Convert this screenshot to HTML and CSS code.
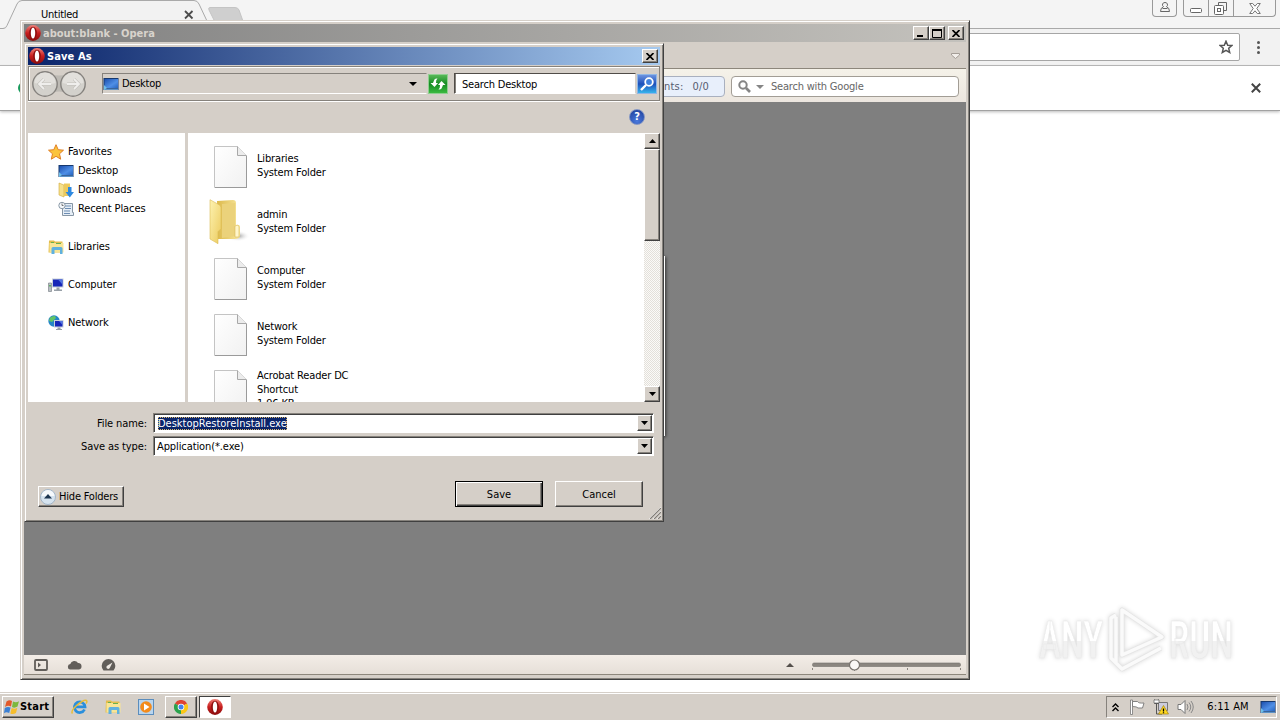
FILE: index.html
```
<!DOCTYPE html>
<html lang="en">
<head>
    <meta charset="UTF-8">
    <meta name="viewport" content="width=device-width, initial-scale=1.0">
    <title>Save As</title>
    <link rel="stylesheet" href="styles.css">
</head>
<body>
    <!-- shared icons -->
    <svg class="defs" width="0" height="0">
        <defs>
            <linearGradient id="gRed" x1="0" y1="0" x2="0" y2="1"><stop offset="0" stop-color="#f08078"/><stop offset=".5" stop-color="#c81e1e"/><stop offset="1" stop-color="#8a0c0c"/></linearGradient>
            <linearGradient id="gBlue" x1="0" y1="0" x2="1" y2="1"><stop offset="0" stop-color="#1c4fae"/><stop offset=".6" stop-color="#4f8fe6"/><stop offset="1" stop-color="#2765c0"/></linearGradient>
            <linearGradient id="gFold" x1="0" y1="0" x2="1" y2="0"><stop offset="0" stop-color="#dcb94c"/><stop offset="1" stop-color="#f8e79c"/></linearGradient>
            <linearGradient id="gFlap" x1="0" y1="0" x2="1" y2="1"><stop offset="0" stop-color="#fdf2b0"/><stop offset="1" stop-color="#eccb5f"/></linearGradient>
            <radialGradient id="gShade"><stop offset="0" stop-color="#9a9a9a"/><stop offset="1" stop-color="#fff" stop-opacity="0"/></radialGradient>
            <linearGradient id="gPage" x1="0" y1="0" x2="1" y2="1"><stop offset="0" stop-color="#ffffff"/><stop offset="1" stop-color="#f1f1f1"/></linearGradient>
            <linearGradient id="gMark" x1="0" y1="0" x2="0" y2="1"><stop offset="0.5" stop-color="#ffffff"/><stop offset=".51" stop-color="#f1f1f1"/></linearGradient>
        </defs>
        <symbol id="opera" viewBox="0 0 16 16">
            <ellipse cx="8" cy="8" rx="7.8" ry="7.900" fill="url(#gRed)"/>
            <ellipse cx="8" cy="8" rx="3.800" ry="6.300" fill="#8d0f0f"/>
            <ellipse cx="8" cy="8" rx="2.200" ry="5.600" class="opera-hole"/>
        </symbol>
        <symbol id="desktop" viewBox="0 0 16 16">
            <rect x=".5" y="2" width="15" height="12" fill="#16386e"/>
            <rect x="1.5" y="3" width="13.500" height="9" fill="url(#gBlue)"/>
            <path d="M1 12.500h14v1.500H1z" fill="#5d93c8"/>
            <path d="M1 9l3 3-3 2z" fill="#6fc0e8"/>
        </symbol>
        <symbol id="libs" viewBox="0 0 16 16">
            <path d="M1 1.500h5l1 1h7.500V13.500H.5z" fill="#e3bd4c"/>
            <path d="M1.500 4h14v9.500H1.500z" fill="#f8e596"/>
            <path d="M3 3h3v1H3zM8 4h5v1H8z" fill="#69b04e"/>
            <path d="M3.500 15V9.500q0-1.500 1.500-1.500h8q1.500 0 1.500 1.500V15H12v-4H6.500v4z" fill="#5fb1df"/>
        </symbol>
        <symbol id="page" viewBox="0 0 34 42">
            <path d="M.5.5h23l9 9v32H.5z" fill="url(#gPage)" stroke="#c4c4c4"/>
            <path d="M1 41.500h32M32.500 10v31" stroke="#9a9a9a" fill="none"/>
            <path d="M23.500.5v9h9" fill="#ececec" stroke="#a8a8a8"/>
        </symbol>
        <symbol id="down" viewBox="0 0 7 4"><path d="M0 0h7L3.500 4z"/></symbol>
        <symbol id="up" viewBox="0 0 7 4"><path d="M0 4h7L3.500 0z"/></symbol>
        <symbol id="cross" viewBox="0 0 8 7"><path d="M.5 0l7 7M7.500 0l-7 7" stroke="#000" stroke-width="1.700" fill="none"/></symbol>
    </svg>

    <main class="desktop">
        <!-- Chrome -->
        <section class="chrome">
            <header class="chrome-tabs">
                <svg class="tab-shape" width="250" height="29">
                    <path d="M0 28.500h3q3 0 4-3L17 4q1.500-3.500 5-3.500h172q3.500 0 5 3.500l8 17v8H0z" fill="#f2f2f2"/>
                    <path d="M0 28.500h3q3 0 4-3L17 4q1.500-3.500 5-3.500h172q3.500 0 5 3.500l8 17" fill="none" stroke="#a9a9a9"/>
                    <path d="M210 7.500h25q3 0 4 2.500l5 14h-28l-7-14q-1-2.500 1-2.500z" fill="#cfcfcf" stroke="#c4c4c4"/>
                    <path d="M185 11l7.500 7.500M192.500 11L185 18.500" stroke="#4c4c4c" stroke-width="1.800"/>
                </svg>
                <span class="tab-title">Untitled</span>
                <div class="chrome-user"><svg width="12" height="12"><path d="M6 1.500a2.300 2.300 0 0 1 1.500 4.200q3 1 3 4.800h-9q0-3.800 3-4.800A2.300 2.300 0 0 1 6 1.500zM3.500 7.500h5" fill="none" stroke="#666"/></svg></div>
                <div class="chrome-controls">
                    <span class="min"><svg width="12" height="5"><rect x=".5" y=".5" width="11" height="4" rx="1" fill="#fff" stroke="#666"/></svg></span>
                    <span class="max"><svg width="13" height="13"><path d="M4.500 3V.5h8v8H10" fill="none" stroke="#666"/><rect x=".5" y="3.500" width="9" height="9" rx="1" fill="#fff" stroke="#666"/><rect x="3.500" y="6.500" width="3" height="3" fill="none" stroke="#666"/></svg></span>
                    <span class="cls"><svg width="12" height="11"><path d="M.7.5h3L6 3.200 8.300.5h3L7.800 5.500l3.500 5h-3L6 7.800 3.700 10.500h-3l3.500-5z" fill="#fff" stroke="#777"/></svg></span>
                </div>
            </header>
            <div class="chrome-toolbar">
                <div class="omnibox"><svg width="14" height="14" viewBox="0 0 14 14"><path d="M7 1.200l1.700 4 4.200.3-3.200 2.800 1 4.200L7 10.300l-3.700 2.200 1-4.200L1.100 5.500l4.200-.3z" fill="none" stroke="#555" stroke-width="1.500"/></svg></div>
                <div class="dots"><i></i><i></i><i></i></div>
            </div>
            <div class="infobar">
                <i class="green-dot"></i>
                <svg width="10" height="10"><path d="M.8.8l8.400 8.400M9.200.8L.8 9.200" stroke="#444" stroke-width="2"/></svg>
            </div>
        </section>

        <!-- Anyrun watermark -->
        <svg class="watermark" width="240" height="80" viewBox="0 0 240 80">
            <g fill="url(#gMark)" stroke="#e9e9e9" stroke-width=".5">
                <text x="10" y="55" textLength="64" lengthAdjust="spacingAndGlyphs">ANY</text>
                <text x="140" y="55" textLength="64" lengthAdjust="spacingAndGlyphs">RUN</text>
            </g>
            <g fill="none" stroke-linejoin="round">
                <path d="M87 12l-5 3v40l11 11 39-21M93 7v45l40-18zM87 14v46" stroke="#e6e6e6" stroke-width="5"/>
                <path d="M87 12l-5 3v40l11 11 39-21M93 7v45l40-18zM87 14v46" stroke="#fafafa" stroke-width="3.400"/>
            </g>
        </svg>

        <!-- Opera -->
        <section class="window opera-win">
            <header class="titlebar inactive">
                <svg class="app-icon gray-hole" width="16" height="16"><use href="#opera"/></svg>
                <span class="caption">about:blank - Opera</span>
                <span class="tb-btn"><svg width="8" height="7"><path d="M0 5h6v2H0z"/></svg></span>
                <span class="tb-btn"><svg width="10" height="9"><path d="M.5 1h9v7.500h-9z" fill="none" stroke="#000"/><path d="M0 0h10v2H0z"/></svg></span>
                <span class="tb-btn last"><svg width="8" height="7"><use href="#cross"/></svg></span>
            </header>
            <div class="opera-tabs"><svg width="9" height="6"><path d="M.5.5h8v1.500l-4 3.500-4-3.500z" fill="#f2eeea" stroke="#a49d96"/></svg></div>
            <div class="opera-toolbar">
                <div class="elements"><span>Elements:</span><span>0/0</span></div>
                <div class="google">
                    <svg width="13" height="13"><circle cx="5" cy="5" r="3.700" fill="none" stroke="#858585" stroke-width="2"/><path d="M8 8l4 4" stroke="#858585" stroke-width="2.600"/></svg>
                    <svg class="drop" width="8" height="4"><path d="M0 0h8L4 4z" fill="#858585"/></svg>
                    <span>Search with Google</span>
                </div>
            </div>
            <div class="opera-page"></div>
            <footer class="opera-status">
                <svg width="14" height="12"><rect x="1" y="1" width="12" height="10" rx="1" fill="none" stroke="#625e5a" stroke-width="1.800"/><path d="M4 3.500L7 6 4 8.500z" fill="#625e5a"/></svg>
                <svg width="15" height="11"><path d="M3 10.500a2.800 2.800 0 0 1 .3-5.500A4.200 4.200 0 0 1 11 4a3.300 3.300 0 0 1 1 6.500z" fill="#625e5a"/></svg>
                <svg width="15" height="12"><path d="M2.500 11.500A6.800 6.800 0 1 1 12.500 11.500z" fill="#625e5a"/><path d="M11.500 3.500L9 8.500a1.800 1.800 0 1 1-2.500-2z" fill="#eee9e3"/></svg>
                <svg class="status-up" width="8" height="4"><path d="M0 4h8L4 0z" fill="#55504c"/></svg>
                <svg width="150" height="16">
                    <rect x=".5" y="6" width="148" height="3.500" rx="1.500" fill="#8b8680" stroke="#74706b" stroke-width=".6"/>
                    <path d="M.5 11v2M42.500 12v2M95.500 11v2M148.500 11v2" stroke="#8b8680"/>
                    <circle cx="42.500" cy="8" r="5" fill="#faf8f6" stroke="#77726d" stroke-width="1.200"/>
                </svg>
            </footer>
        </section>

        <div class="behind"></div>

        <!-- Save As dialog -->
        <section class="window dialog">
            <header class="titlebar active">
                <svg class="app-icon" width="16" height="16"><use href="#opera"/></svg>
                <span class="caption">Save As</span>
                <span class="tb-btn"><svg width="8" height="7"><use href="#cross"/></svg></span>
            </header>
            <div class="addressbar">
                <svg class="nav-btns" width="56" height="28">
                    <path d="M14 3q14 5 28 0v21q-14-5-28 0z" fill="#bdbab4"/>
                    <g fill="#d3d1cc" stroke="#85827e" stroke-width="1.400"><circle cx="14" cy="14" r="12.200"/><circle cx="42" cy="14" r="12.200"/></g>
                    <path d="M3.500 13a10.500 10.500 0 0 1 21 0q-10 3-21 0zM31.500 13a10.500 10.500 0 0 1 21 0q-10 3-21 0z" fill="#e2e0dc"/>
                    <path d="M20 14H8.500M13 9l-5 5 5 5M36 14h11.500M43 9l5 5-5 5" fill="none" stroke="#c2bfba" stroke-width="3"/>
                    <path d="M20 14H8.500M13 9l-5 5 5 5M36 14h11.500M43 9l5 5-5 5" fill="none" stroke="#efeeec" stroke-width="1.800"/>
                </svg>
                <div class="address">
                    <svg width="16" height="16"><use href="#desktop"/></svg>
                    <span>Desktop</span>
                    <svg class="arrow" width="8" height="4"><path d="M0 0h8L4 4z"/></svg>
                </div>
                <div class="refresh"><svg width="18" height="18"><path d="M5 5.500Q5.500 3 8.500 3.500 6.800 4.500 7 8h2L5.500 12 1.500 8H4zM13 12.500q-.5 2.500-3.500 2Q11.200 13.500 11 10H9l3.500-4 4 4H14z" fill="#fff"/></svg></div>
                <div class="search">Search Desktop</div>
                <div class="search-btn"><svg width="18" height="18"><circle cx="11" cy="7" r="3.800" fill="#3f80dc" stroke="#fff" stroke-width="1.800"/><path d="M8 10l-5 5" stroke="#fff" stroke-width="2.400"/></svg></div>
            </div>
            <div class="helpbar">
                <div class="help">?</div>
            </div>
            <div class="panes">
                <nav class="tree">
                    <div class="node"><svg width="16" height="16"><path d="M8 .7l2.200 5 5.300.5-4 3.600 1.200 5.400L8 12.300l-4.700 2.900 1.200-5.400-4-3.600 5.300-.5z" fill="#fbc43c" stroke="#e07f26"/></svg>Favorites</div>
                    <div class="node sub"><svg width="16" height="16"><use href="#desktop"/></svg>Desktop</div>
                    <div class="node sub"><svg width="16" height="16"><path d="M1 1l5 2v12l-5-2z" fill="#f6e08a" stroke="#d2a93a" stroke-width=".6"/><path d="M6 1.500h6V14H6z" fill="#edca5c"/><path d="M10 5h3.500v5H16l-4.200 5.500L7.500 10H10z" fill="#2f8ae0"/></svg>Downloads</div>
                    <div class="node sub"><svg width="16" height="16"><path d="M4.500 2.500h10v9h1v3h-11z" fill="#e6eef6" stroke="#8796a5"/><path d="M7 5h6M7 7.500h6M6 10h6M6 12.500h6" stroke="#6d8db3"/><circle cx="4" cy="4.500" r="3.200" fill="#f4f7fa" stroke="#8998a6"/><path d="M4 2.500v2h1.500" fill="none" stroke="#555" stroke-width=".8"/></svg>Recent Places</div>
                    <div class="node top"><svg width="16" height="16"><use href="#libs"/></svg>Libraries</div>
                    <div class="node top"><svg width="16" height="16"><path d="M.5 6h3v8.500h-3z" fill="#b9bfc4" stroke="#7f868c" stroke-width=".7"/><path d="M4 1.500h11.500v9H4z" fill="#c6cfda"/><path d="M5 2.500h9.500V9.500H5z" fill="#1726b8"/><path d="M10 2.500h4.500v5z" fill="#5477e2"/><path d="M8.500 10.500h3v2h2.500v1.500H6v-1.500h2.500z" fill="#98a0a8"/><path d="M1.300 8h1.400v1.500H1.300z" fill="#3ea845"/></svg>Computer</div>
                    <div class="node top"><svg width="16" height="16"><circle cx="6" cy="6" r="5.700" fill="#2486c8"/><path d="M2 2.500q3-2 5-1.500l1 2-4 4-3-1zM6 7l3 2-2 2.700z" fill="#62c465"/><path d="M6 5h9.500v7.500H6z" fill="#c6cfda"/><path d="M7 6h7.500v5.500H7z" fill="#1726b8"/><path d="M11 6h3.500v4z" fill="#5477e2"/><path d="M9.500 12.500h3v1.500H14v1H8v-1h1.500z" fill="#98a0a8"/></svg>Network</div>
                </nav>
                <div class="files">
                    <div class="file"><div class="thumb"><svg width="34" height="42"><use href="#page"/></svg></div><div>Libraries<br>System Folder</div></div>
                    <div class="file"><div class="thumb folder"><svg width="42" height="46"><ellipse cx="29" cy="37" rx="12" ry="5.500" fill="url(#gShade)"/><path d="M8 2l16-1q3 0 3 3v22q4-1 4 2v9q-1 3-5 3H9z" fill="url(#gFold)"/><path d="M13 5l13-1v33l-13 2z" fill="#ebd27b"/><path d="M26 27q4-2 4 1v10h-4z" fill="#fff6ca" stroke="#d9bb5c" stroke-width=".6"/><path d="M1 .7l9 5q2 1 2 3v21l-3 3v12L1 40z" fill="url(#gFlap)" stroke="#dcbc56" stroke-width=".6"/></svg></div><div>admin<br>System Folder</div></div>
                    <div class="file"><div class="thumb"><svg width="34" height="42"><use href="#page"/></svg></div><div>Computer<br>System Folder</div></div>
                    <div class="file"><div class="thumb"><svg width="34" height="42"><use href="#page"/></svg></div><div>Network<br>System Folder</div></div>
                    <div class="file"><div class="thumb"><svg width="34" height="42"><use href="#page"/></svg></div><div>Acrobat Reader DC<br>Shortcut<br>1.96 KB</div></div>
                </div>
                <div class="scrollbar">
                    <span class="sb-btn"><svg width="7" height="4"><use href="#up"/></svg></span>
                    <span class="sb-thumb"></span>
                    <span class="sb-btn end"><svg width="7" height="4"><use href="#down"/></svg></span>
                </div>
            </div>
            <div class="fields">
                <span class="label">File name:</span>
                <div class="combo"><span class="selected">DesktopRestoreInstall.exe</span><span class="sb-btn"><svg width="7" height="4"><use href="#down"/></svg></span></div>
                <span class="label">Save as type:</span>
                <div class="combo"><span class="type">Application(*.exe)</span><span class="sb-btn"><svg width="7" height="4"><use href="#down"/></svg></span></div>
            </div>
            <div class="actions">
                <div class="button hide"><svg width="16" height="16"><circle cx="8" cy="8" r="7.500" fill="#d5e3ef" stroke="#a3b6c8"/><path d="M1.500 7a6.500 6 0 0 1 13 0z" fill="#f5f9fc"/><path d="M4 9.500h8L8 5z" fill="#1c3550"/></svg><span>Hide Folders</span></div>
                <div class="button default"><span>Save</span></div>
                <div class="button cancel"><span>Cancel</span></div>
            </div>
            <svg class="grip" width="12" height="12"><path d="M0 12L12 0M4 12l8-8M8 12l4-4" stroke="#fff"/><path d="M1 12L12 1M5 12l7-7M9 12l3-3" stroke="#807c76" stroke-width="1.200"/></svg>
        </section>
    </main>

    <footer class="taskbar">
        <div class="start">
            <svg width="16" height="16"><path d="M2.500 2.500q3-2 5.500-.5L7 7.500Q4 6 1 8z" fill="#e2592a"/><path d="M9 2.500q3 1.500 6-.3L13.500 7.500q-3 2-5.500.5z" fill="#7cb83c"/><path d="M.8 9q3-1.800 5.800-.4L5.200 14q-3-1.500-5.200.2z" fill="#3b80d4"/><path d="M7.700 9q3 1.500 5.600-.2L12 14q-3 2-5.700.4z" fill="#f6bd2b"/></svg>
            <span>Start</span>
        </div>
        <div class="quick">
            <svg width="17" height="16"><path d="M13.500 10.500A5.300 5.300 0 1 1 14 7.800H5" fill="none" stroke="#2a8fdc" stroke-width="2.800"/><path d="M1.500 14.500q-2-2 3.500-7.500 8-7 10.500-5.500 1 1-.5 3" fill="none" stroke="#e8bd38" stroke-width="1.500"/></svg>
            <svg width="16" height="16"><use href="#libs"/></svg>
            <svg width="16" height="16"><rect x=".5" y=".5" width="15" height="15" fill="#b9d5ee" stroke="#5b8dbd"/><circle cx="8" cy="8" r="5.800" fill="#f38b1c"/><path d="M6 4.500L11.500 8 6 11.500z" fill="#fff"/></svg>
        </div>
        <div class="task"><svg width="14" height="14" viewBox="0 0 14 14"><path d="M7 7L.9 3.500A7 7 0 0 1 13.100 3.500z" fill="#df4334"/><path d="M7 7V14A7 7 0 0 1 .9 3.500z" fill="#2ba24c"/><path d="M7 7l6.100-3.500A7 7 0 0 1 7 14z" fill="#fbc716"/><circle cx="7" cy="7" r="3.300" fill="#fff"/><circle cx="7" cy="7" r="2.500" fill="#4482ee"/></svg></div>
        <div class="task pressed"><svg width="16" height="16"><use href="#opera"/></svg></div>
        <div class="tray">
            <svg width="7" height="9"><path d="M.5 4l3-3 3 3M.5 8l3-3 3 3" fill="none" stroke="#000" stroke-width="1.400"/></svg>
            <svg class="flag" width="16" height="16"><path d="M1.500 1v14.500h2V1z" fill="#fff" stroke="#777" stroke-width=".8"/><path d="M3.500 2.500h5q1 2 6.500 1.500l-1.500 5H9q-1-1.500-5.500-1.500z" fill="#fff" stroke="#777" stroke-width=".9"/></svg>
            <svg class="net" width="16" height="16"><path d="M5.500 3.500h9v8h-9z" fill="#ccd" stroke="#777"/><path d="M1.500.5v4h4v-4M3.500 4.500V15H9" fill="none" stroke="#555"/><path d="M1 1h5v3H1z" fill="#fff" stroke="#666" stroke-width=".7"/><path d="M10.500 6.500L15.500 15h-10z" fill="#ffd91f" stroke="#a48312" stroke-width=".7"/><path d="M10.500 9.500v3M10.500 13.200v1" stroke="#000" stroke-width="1.300"/></svg>
            <svg class="vol" width="17" height="16"><path d="M1 5.500h3l4-4v13l-4-4H1z" fill="#fff" stroke="#777"/><path d="M10 5q2 3 0 6M12 3.500q3.500 4.500 0 9M14 2q4.500 6 0 12" fill="none" stroke="#888"/></svg>
            <span class="clock">6:11 AM</span>
            <svg width="16" height="16"><use href="#desktop"/></svg>
        </div>
    </footer>
</body>
</html>
```
FILE: styles.css
```
* {
    box-sizing: border-box;
}
body {
    margin: 0;
    width: 1280px;
    height: 720px;
    overflow: hidden;
    display: flex;
    flex-direction: column;
    background: #fff;
    font-family: "DejaVu Sans Condensed", "DejaVu Sans", sans-serif;
    font-stretch: condensed;
    font-size: 11px;
    line-height: 14px;
    letter-spacing: -0.1px;
    color: #000;
    white-space: nowrap;
}
svg {
    display: block;
    flex: none;
}
.defs {
    position: absolute;
}
.desktop {
    position: relative;
    height: 692px;
}

/* Chrome */
.chrome {
    height: 692px;
    background: #fff;
}
.chrome-tabs {
    display: flex;
    height: 29px;
    background: #f4f4f4;
    border-bottom: 1px solid #a9a9a9;
}
.tab-shape {
    margin-right: -250px;
}
.tab-title {
    padding: 8px 0 0 41px;
    flex: 1;
    z-index: 1;
    letter-spacing: -0.25px;
}
.chrome-user {
    width: 25px;
    height: 17px;
    border: 1px solid #999;
    border-top: 0;
    border-radius: 0 0 4px 4px;
    padding: 1px 0 0 6px;
    margin-right: 6px;
}
.chrome-controls {
    display: flex;
    width: 93px;
    height: 17px;
    border: 1px solid #999;
    border-top: 0;
    border-radius: 0 0 4px 4px;
    margin-right: 4px;
}
.chrome-controls .min {
    width: 25px;
    padding: 8px 0 0 6px;
    border-right: 1px solid #999;
}
.chrome-controls .max {
    width: 25px;
    padding: 2px 0 0 5px;
    border-right: 1px solid #999;
}
.chrome-controls .cls {
    padding: 3px 0 0 15px;
}
.chrome-toolbar {
    display: flex;
    height: 37px;
    padding: 4px 0 0 26px;
    background: #f2f2f2;
    border-bottom: 1px solid #b4b4b4;
}
.omnibox {
    width: 1214px;
    height: 28px;
    background: #fff;
    border: 1px solid #a6a6a6;
    border-radius: 2px;
    display: flex;
    justify-content: flex-end;
    align-items: center;
    padding-right: 6px;
}
.dots {
    display: flex;
    flex-direction: column;
    gap: 2px;
    padding: 8px 0 0 17px;
}
.dots i {
    width: 3px;
    height: 3px;
    border-radius: 50%;
    background: #555;
}
.infobar {
    display: flex;
    align-items: center;
    justify-content: space-between;
    height: 45px;
    padding: 0 19px 0 18px;
    border-bottom: 1px solid #a2a2a2;
    box-shadow: 0 1px 3px #bbb;
}
.green-dot {
    width: 12px;
    height: 12px;
    border-radius: 50%;
    background: #189a5c;
}

.watermark {
    position: absolute;
    left: 1029px;
    top: 603px;
    filter: drop-shadow(0 0 2px #d8d8d8);
    font-family: "Roboto", sans-serif;
    font-size: 52px;
    font-weight: 500;
    letter-spacing: 0;
}

/* Classic windows */
.window {
    position: absolute;
    display: flex;
    flex-direction: column;
    background: #d5cfc8;
    border: 1px solid;
    border-color: #d5cfc8 #404040 #404040 #d5cfc8;
    box-shadow: inset 1px 1px #fff, inset -1px -1px #86827c;
    padding: 3px;
}
.opera-win {
    left: 20px;
    top: 20px;
    width: 950px;
    height: 660px;
}
.dialog {
    left: 24px;
    top: 43px;
    width: 640px;
    height: 479px;
}
.titlebar {
    display: flex;
    align-items: center;
    height: 18px;
    font-weight: bold;
    flex: none;
}
.inactive {
    background: linear-gradient(90deg, #808080, #c4c2bd);
    color: #d8d3cc;
    padding-right: 2px;
}
.active {
    background: linear-gradient(90deg, #0a246a, #a6caf0);
    color: #fff;
    padding-right: 2px;
}
.app-icon {
    margin: 0 2px 0 1px;
}
.opera-hole {
    fill: #fff;
}
.active .opera-hole {
    fill: #12307a;
}
.gray-hole .opera-hole {
    fill: #858585;
}
.caption {
    flex: 1;
    padding-top: 1px;
    letter-spacing: 0;
}
.active .caption {
    letter-spacing: 0.1px;
}
.tb-btn, .sb-btn {
    display: flex;
    align-items: center;
    justify-content: center;
    width: 16px;
    height: 14px;
    background: #d5cfc8;
    border: 1px solid;
    border-color: #fff #404040 #404040 #fff;
    box-shadow: inset -1px -1px #86827c;
    flex: none;
}
.tb-btn.last {
    margin-left: 3px;
}
.opera-tabs {
    display: flex;
    align-items: center;
    justify-content: flex-end;
    height: 27px;
    padding: 2px 6px 0 0;
    border-bottom: 1px solid #8d877c;
}
.opera-toolbar {
    display: flex;
    justify-content: flex-end;
    gap: 6px;
    height: 33px;
    padding: 7px 7px 0 0;
    background: linear-gradient(#f5f2e9, #ece6df);
    color: #666;
}
.elements {
    display: flex;
    justify-content: flex-end;
    gap: 9px;
    width: 400px;
    height: 21px;
    padding: 3px 15px 0 0;
    border: 1px solid #a9b0bf;
    border-radius: 4px;
    background: #e8effb;
    color: #555c70;
    letter-spacing: 0.2px;
}
.google {
    display: flex;
    align-items: center;
    width: 228px;
    height: 21px;
    padding-left: 6px;
    background: #fff;
    border: 1px solid #a29d95;
    border-radius: 4px;
    letter-spacing: -0.2px;
}
.google .drop {
    margin: 0 7px 0 5px;
}
.opera-page {
    height: 553px;
    background: #7f7f7f;
}
.opera-status {
    display: flex;
    align-items: center;
    gap: 19px;
    height: 20px;
    padding: 0 4px 0 10px;
    background: linear-gradient(#f3ede7, #e6dfd8);
    border-bottom: 1px solid #8d877c;
}
.status-up {
    margin-left: auto;
}
.opera-status .status-up + svg {
    margin-left: -1px;
}
.behind {
    position: absolute;
    left: 600px;
    top: 256px;
    width: 65px;
    height: 180px;
    background: #fff;
    box-shadow: 1px 1px 3px #333;
}

/* Save As */
.addressbar {
    display: flex;
    align-items: center;
    height: 35px;
    margin-top: 1px;
    padding-left: 2px;
    border: 1px solid #86827c;
    box-shadow: inset 1px 1px #fff, 0 1px #fff;
    flex: none;
}
.nav-btns {
    margin-right: 15px;
}
.address {
    display: flex;
    align-items: center;
    width: 325px;
    height: 21px;
    border: 1px solid;
    border-color: #86827c #d5cfc8 #fff #86827c;
    letter-spacing: -0.25px;
}
.address span {
    flex: 1;
    padding-left: 3px;
}
.address .arrow {
    margin-right: 9px;
}
.refresh, .search-btn {
    width: 20px;
    height: 20px;
    border: 1px solid #8fcf90;
    background: linear-gradient(#57b857, #148a22 50%, #3cba40);
    margin-left: 1px;
}
.search {
    width: 182px;
    height: 21px;
    margin-left: 6px;
    padding: 4px 0 0 7px;
    background: #fff;
    border: 1px solid;
    border-color: #504c48 #d5cfc8 #fff #504c48;
    box-shadow: inset 1px 0 #86827c;
    letter-spacing: -0.2px;
}
.search-btn {
    border-color: #8fb6e6;
    background: linear-gradient(#6b93e0, #1d50bb 50%, #36b4ec);
}
.helpbar {
    display: flex;
    justify-content: flex-end;
    align-items: center;
    height: 32px;
    padding-right: 15px;
    flex: none;
}
.help {
    width: 16px;
    height: 16px;
    border: 1px solid #8295c4;
    border-radius: 50%;
    background: radial-gradient(circle at 50% 80%, #4a79dc, #1b3d98);
    color: #fff;
    font-weight: bold;
    text-align: center;
}
.panes {
    display: flex;
    height: 269px;
    background: #fff;
    overflow: hidden;
    flex: none;
}
.tree {
    width: 160px;
    padding: 9px 0 0 20px;
    border-right: 3px solid #d5cfc8;
}
.node {
    display: flex;
    align-items: center;
    gap: 4px;
    height: 19px;
}
.node.sub {
    padding-left: 10px;
}
.node.top {
    margin-top: 19px;
}
.files {
    flex: 1;
    padding-top: 5px;
    letter-spacing: -0.15px;
}
.file {
    display: flex;
    align-items: center;
    height: 56px;
}
.thumb {
    width: 69px;
    padding: 2px 0 0 26px;
    flex: none;
}
.thumb.folder {
    padding: 0 0 0 21px;
}
.scrollbar {
    display: flex;
    flex-direction: column;
    width: 16px;
    background: repeating-conic-gradient(#e3e0da 0 25%, #fbfaf8 0 50%) 0 0 / 2px 2px;
}
.sb-btn {
    height: 16px;
}
.sb-thumb {
    height: 92px;
    background: #d5cfc8;
    border: 1px solid;
    border-color: #fff #404040 #404040 #fff;
    box-shadow: inset -1px -1px #86827c;
}
.sb-btn.end {
    margin-top: auto;
}
.fields {
    display: grid;
    grid-template-columns: 120px 501px;
    grid-auto-rows: 20px;
    column-gap: 5px;
    row-gap: 3px;
    padding-top: 11px;
    flex: none;
}
.label {
    text-align: right;
    padding: 4px 1px 0 0;
}
.combo {
    display: flex;
    align-items: center;
    justify-content: space-between;
    background: #fff;
    border: 1px solid;
    border-color: #86827c #fff #fff #86827c;
    box-shadow: inset 1px 1px #404040;
    padding: 1px 1px 1px 3px;
}
.selected {
    background: #0a246a;
    color: #fff;
    margin-left: 1px;
    line-height: 13px;
    letter-spacing: 0;
    outline: 1px dotted #d8b56a;
    outline-offset: -1px;
}
.type {
    padding-top: 1px;
}
.combo .sb-btn {
    width: 15px;
    height: 16px;
}
.actions {
    display: flex;
    padding: 25px 0 0 10px;
}
.button {
    display: flex;
    align-items: center;
    justify-content: center;
    width: 88px;
    height: 26px;
    padding-top: 1px;
    border: 1px solid;
    border-color: #fff #404040 #404040 #fff;
    box-shadow: inset -1px -1px #86827c;
    letter-spacing: 0;
}
.button.hide {
    justify-content: flex-start;
    width: 86px;
    height: 21px;
    margin: 5px 331px 0 0;
    padding: 0 0 0 1px;
    gap: 3px;
    letter-spacing: -0.2px;
}
.button.hide span {
    padding-top: 1px;
}
.button.default {
    border-color: #000;
    box-shadow: inset 1px 1px #fff, inset -1px -1px #404040, inset -2px -2px #86827c;
}
.button.cancel {
    margin-left: 12px;
}
.grip {
    position: absolute;
    right: 2px;
    bottom: 2px;
}

/* Taskbar */
.taskbar {
    display: flex;
    align-items: center;
    height: 28px;
    padding: 1px 3px 0 2px;
    background: #d5cfc8;
    border-top: 1px solid #d5cfc8;
    box-shadow: inset 0 1px #fff;
}
.start, .task {
    display: flex;
    align-items: center;
    justify-content: center;
    width: 52px;
    height: 22px;
    border: 1px solid;
    border-color: #fff #404040 #404040 #fff;
    box-shadow: inset -1px -1px #86827c;
    font-weight: bold;
}
.start {
    justify-content: flex-start;
    padding-left: 1px;
    letter-spacing: 0.2px;
}
.quick {
    display: flex;
    gap: 17px;
    padding: 0 11px 0 17px;
}
.task {
    width: 32px;
    margin-right: 2px;
}
.task.pressed {
    background: #fff;
    border-color: #404040 #fff #fff #404040;
    box-shadow: none;
}
.tray {
    display: flex;
    align-items: center;
    width: 171px;
    height: 22px;
    margin-left: auto;
    padding-left: 5px;
    border: 1px solid;
    border-color: #86827c #fff #fff #86827c;
}
.flag {
    margin-left: 10px;
}
.net, .vol {
    margin-left: 8px;
}
.clock {
    flex: 1;
    padding-left: 2px;
    text-align: center;
    letter-spacing: 0.1px;
}
```
